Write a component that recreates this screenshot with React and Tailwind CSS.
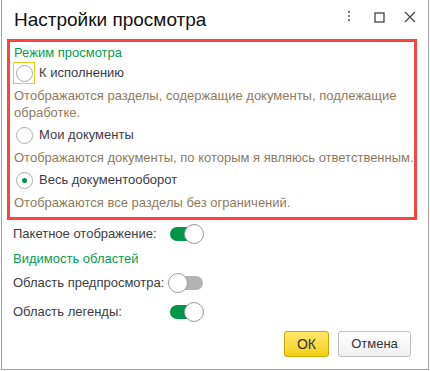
import React, { useState } from 'react'

function Radio({ checked, focused }) {
  return (
    <span className={`flex h-[22px] w-[22px] items-center justify-center ${focused ? 'border border-[#f5c518]' : 'border border-transparent'}`}>
      <span className="flex h-[17px] w-[17px] items-center justify-center rounded-full border border-[#ababab] bg-white">
        {checked && <span className="h-[5px] w-[5px] rounded-full bg-[#00964a]" />}
      </span>
    </span>
  )
}

function Toggle({ on }) {
  return (
    <span className="relative flex h-[20px] w-[36px] items-center">
      <span className={`ml-[2px] h-[14px] w-[33px] rounded-full ${on ? 'bg-[#00964a]' : 'bg-[#b3b3b3]'}`} />
      <span className={`absolute top-0 h-[20px] w-[20px] rounded-full border border-[#9a9a9a] bg-white ${on ? 'left-[16px]' : 'left-0'}`} />
    </span>
  )
}

const modes = [
  { id: 'exec', label: 'К исполнению', desc: ['Отображаются разделы, содержащие документы, подлежащие', 'обработке.'] },
  { id: 'mine', label: 'Мои документы', desc: ['Отображаются документы, по которым я являюсь ответственным.'] },
  { id: 'all', label: 'Весь документооборот', desc: ['Отображаются все разделы без ограничений.'] },
]

export default function App() {
  const [mode] = useState('all')

  return (
    <div className="h-[371px] w-[430px] bg-white" style={{ fontFamily: '"Liberation Sans", Arial, sans-serif' }}>
      <div className="ml-[1px] flex h-[370px] w-[428px] flex-col border-x border-b border-[#a3a3a3]">
        {/* header */}
        <div className="flex h-[39px] items-start pl-[12px] pt-[8px]">
          <h1 className="text-[19px] leading-[23px] text-[#111]">Настройки просмотра</h1>
          <div className="ml-auto mr-[12px] mt-[3px] flex items-center text-[#4a4a4a]">
            <svg width="4" height="12" viewBox="0 0 4 12" className="mr-[23px]">
              <rect x="1" y="0" width="2" height="2" fill="#777" />
              <rect x="1" y="4" width="2" height="2" fill="#777" />
              <rect x="1" y="8" width="2" height="2" fill="#777" />
            </svg>
            <svg width="11" height="11" viewBox="0 0 11 11" className="mr-[19px]">
              <rect x="1" y="1" width="9" height="9" fill="none" stroke="#333" strokeWidth="1.2" />
            </svg>
            <svg width="12" height="12" viewBox="0 0 12 12">
              <path d="M1 1 L11 11 M11 1 L1 11" stroke="#444" strokeWidth="1.2" />
            </svg>
          </div>
        </div>

        {/* mode group */}
        <div className="ml-[5px] w-[410px] border-[3px] border-[#ff4343] pb-[6px] pl-[3px] text-[13px]">
          <div className="mt-[2px] h-[17px] pl-[1px] leading-[17px] text-[#00a050]">Режим просмотра</div>
          {modes.map((m, i) => (
            <div key={m.id} className={i === 0 ? 'mt-[1px]' : 'mt-[3px]'}>
              <div className="flex h-[22px] items-center">
                <Radio checked={mode === m.id} focused={i === 0} />
                <span className="ml-[4px] text-[#3c3c46]">{m.label}</span>
              </div>
              <div className="mt-[3px] pl-[1px] leading-[17px] text-[#8d7b5f]">
                {m.desc.map((d) => (
                  <div key={d}>{d}</div>
                ))}
              </div>
            </div>
          ))}
        </div>

        {/* other settings */}
        <div className="pl-[11px] text-[13px] text-[#3c3c46]">
          <div className="mt-[2px] flex h-[24px] items-center">
            <span className="w-[155px]">Пакетное отображение:</span>
            <Toggle on />
          </div>
          <div className="mt-[4px] h-[18px] leading-[18px] text-[#00a050]">Видимость областей</div>
          <div className="mt-[3px] flex h-[24px] items-center">
            <span className="w-[155px]">Область предпросмотра:</span>
            <Toggle on={false} />
          </div>
          <div className="mt-[5px] flex h-[24px] items-center">
            <span className="w-[155px]">Область легенды:</span>
            <Toggle on />
          </div>
        </div>

        {/* buttons */}
        <div className="mt-auto mb-[12px] mr-[17px] flex justify-end gap-[9px]">
          <button className="h-[26px] w-[45px] rounded-[3px] border border-[#c9a600] bg-gradient-to-b from-[#ffe866] to-[#f2cf00] text-[14px] text-[#333]">
            ОК
          </button>
          <button className="h-[26px] w-[73px] rounded-[3px] border border-[#bdbdbd] bg-gradient-to-b from-white to-[#f0f0f0] text-[13px] text-[#333]">
            Отмена
          </button>
        </div>
      </div>
    </div>
  )
}
